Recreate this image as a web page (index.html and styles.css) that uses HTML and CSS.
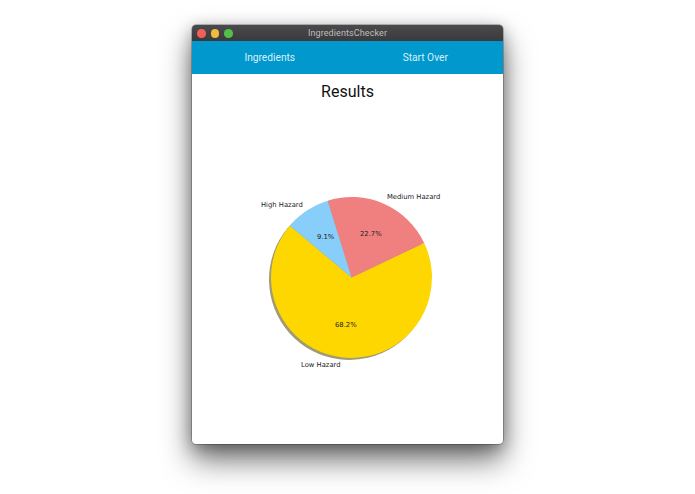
FILE: index.html
```html
<!DOCTYPE html>
<html lang="en">
<head>
<meta charset="utf-8">
<title>IngredientsChecker</title>
<link rel="stylesheet" href="styles.css">
</head>
<body>
<main class="window">
  <header class="titlebar">
    <div class="lights">
      <span class="light red"></span>
      <span class="light yellow"></span>
      <span class="light green"></span>
    </div>
    <span class="title">IngredientsChecker</span>
  </header>
  <nav class="tabs">
    <span class="tab">Ingredients</span>
    <span class="tab">Start Over</span>
  </nav>
  <section class="content">
    <h1 class="heading">Results</h1>
    <svg class="chart" viewBox="0 0 311 340" width="311" height="340" role="img" aria-label="Pie chart of hazard levels">
      <g transform="translate(159.5 173.5)">
        <g class="shadow" transform="translate(-2 2)">
          <path d="M0 0L-61.67 -51.75A80.5 80.5 0 1 0 72.69 -34.6Z"/>
          <path d="M0 0L72.69 -34.6A80.5 80.5 0 0 0 -23.9 -76.87Z"/>
          <path d="M0 0L-23.9 -76.87A80.5 80.5 0 0 0 -61.67 -51.75Z"/>
        </g>
        <path class="low" d="M0 0L-61.67 -51.75A80.5 80.5 0 1 0 72.69 -34.6Z"/>
        <path class="medium" d="M0 0L72.69 -34.6A80.5 80.5 0 0 0 -23.9 -76.87Z"/>
        <path class="high" d="M0 0L-23.9 -76.87A80.5 80.5 0 0 0 -61.67 -51.75Z"/>
      </g>
      <text class="label" x="195" y="94.5">Medium Hazard</text>
      <text class="label" x="69" y="102.5">High Hazard</text>
      <text class="label" x="109" y="262.5">Low Hazard</text>
      <text class="label" x="125" y="135">9.1%</text>
      <text class="label" x="168" y="131.5">22.7%</text>
      <text class="label" x="143" y="223">68.2%</text>
    </svg>
  </section>
</main>
</body>
</html>
```
FILE: styles.css
```css
html, body {
  margin: 0;
  height: 100%;
  background: #fff;
  overflow: hidden;
}

body {
  display: flex;
  justify-content: center;
  align-items: flex-start;
  padding-top: 25px;
  box-sizing: border-box;
}

.window {
  width: 311px;
  height: 419px;
  display: flex;
  flex-direction: column;
  border-radius: 4px;
  background: #fff;
  overflow: hidden;
  box-shadow: 0 0 0 0.5px rgba(0, 0, 0, .45), 0 16px 30px rgba(0, 0, 0, .55), 0 4px 16px rgba(0, 0, 0, .3);
}

.titlebar {
  height: 16px;
  flex: none;
  display: flex;
  align-items: center;
  justify-content: center;
  position: relative;
  background: linear-gradient(#4a4a4c, #3a3a3c);
}

.lights {
  position: absolute;
  left: 5px;
  top: 4px;
  display: flex;
  gap: 5px;
}

.light {
  width: 8.5px;
  height: 8.5px;
  border-radius: 50%;
}

.red { background: #f0605a; }
.yellow { background: #ecbb40; }
.green { background: #52bf48; }

.title {
  font: 9px/16px "Roboto", "Liberation Sans", sans-serif;
  color: #bdbdbd;
  letter-spacing: .1px;
}

.tabs {
  height: 33px;
  flex: none;
  display: grid;
  grid-template-columns: 1fr 1fr;
  background: #0098cd;
}

.tab {
  display: flex;
  justify-content: center;
  align-items: center;
  font: 10.2px "Roboto", "Liberation Sans", sans-serif;
  color: #d8f1fa;
}

.content {
  flex: 1;
  display: flex;
  flex-direction: column;
  align-items: center;
  min-height: 0;
}

.heading {
  margin: 8px 0 0;
  font: 400 16px/20px "Roboto", "Liberation Sans", sans-serif;
  color: #111;
}

.chart {
  display: block;
  flex: none;
  margin-top: 2px;
}

.shadow path { fill: #a09b72; }
.low { fill: #ffd700; }
.medium { fill: #f08080; }
.high { fill: #87cefa; }

.label {
  font: 6.8px "DejaVu Sans", sans-serif;
  fill: #222;
}
```
